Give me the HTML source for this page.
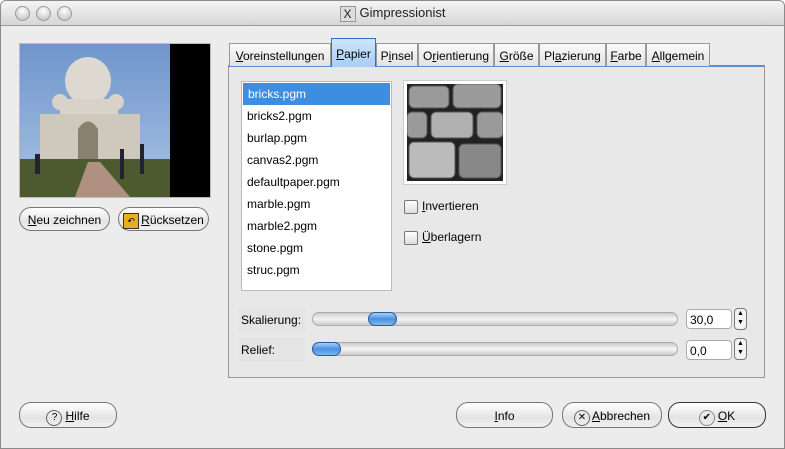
<!DOCTYPE html>
<html><head><style>
body{margin:0;width:785px;height:449px;background:#fff;font-family:"Liberation Sans",sans-serif;font-size:12px;overflow:hidden;position:relative}
.win{position:absolute;left:0;top:0;width:783px;height:447px;border:1px solid #8a8a8a;border-radius:6px 6px 0 0;background:#ececec;overflow:hidden}
.title{height:24px;background:linear-gradient(#f4f4f4,#d6d6d6);border-bottom:1px solid #9a9a9a;text-align:center;line-height:24px;font-size:13px;color:#222}
.dot{position:absolute;top:5px;width:13px;height:13px;border-radius:50%;background:radial-gradient(circle at 50% 30%,#fff,#bbb);border:1px solid #999}
.a{position:absolute}
.btn{position:absolute;height:24px;border:1px solid #777;border-radius:12px;background:linear-gradient(#fff,#e4e4e4 60%,#f0f0f0);text-align:center;line-height:24px;font-size:12px;box-sizing:border-box}
.tab{position:absolute;top:42px;height:23px;border:1px solid #999;border-bottom:none;background:linear-gradient(#fafafa,#e2e2e2);font-size:12px;line-height:24px;text-align:center;box-sizing:border-box}
.list div{height:22px;line-height:22px;padding-left:5px;font-size:12px}
.cb{position:absolute;width:12px;height:12px;border:1px solid #777;background:linear-gradient(#fff,#ddd);border-radius:2px}
.trough{position:absolute;height:12px;border:1px solid #aaa;border-radius:7px;background:linear-gradient(#ccc,#f4f4f4 50%,#ccc)}
.knob{position:absolute;height:12px;border:1px solid #2a5a9a;border-radius:7px;background:linear-gradient(#a8d0f8,#4a90e0 50%,#7fb8f0)}
.spin{position:absolute;width:46px;height:20px;border:1px solid #aaa;border-radius:4px;background:#fff;line-height:20px;padding-left:3px;box-sizing:border-box}
.arr{position:absolute;width:13px;height:22px;border:1px solid #777;border-radius:4px;background:#f4f4f4;font-size:7px;line-height:9px;text-align:center;box-sizing:border-box}
</style></head><body>
<div class="win">
<div class="title"><span style="display:inline-block;width:14px;height:14px;border:1px solid #999;background:#ddd;font-size:12px;line-height:14px;vertical-align:middle;margin-right:4px">X</span>Gimpressionist</div>
<div class="dot" style="left:14px"></div><div class="dot" style="left:35px"></div><div class="dot" style="left:56px"></div>

<div class="a" style="left:18px;top:42px;width:190px;height:153px;border:1px solid #bbb;background:#000">
<svg width="150" height="153" style="position:absolute;left:0;top:0">
<defs><linearGradient id="s" x1="0" y1="0" x2="0" y2="1"><stop offset="0" stop-color="#6f95cc"/><stop offset="1" stop-color="#a9c3e3"/></linearGradient></defs>
<rect width="150" height="153" fill="url(#s)"/>
<ellipse cx="68" cy="37" rx="23" ry="24" fill="#ddd8d0"/>
<rect x="40" y="55" width="58" height="60" fill="#d8d2c8"/>
<rect x="20" y="70" width="100" height="45" fill="#cfc8bc"/>
<ellipse cx="40" cy="58" rx="8" ry="8" fill="#d8d2c8"/><ellipse cx="96" cy="58" rx="8" ry="8" fill="#d8d2c8"/>
<path d="M58 115 V85 Q68 70 78 85 V115Z" fill="#8a8070"/>
<rect x="0" y="115" width="150" height="38" fill="#4d5a30"/>
<path d="M55 153 L68 118 L80 118 L110 153Z" fill="#b09080"/>
<rect x="120" y="100" width="4" height="30" fill="#223"/><rect x="100" y="105" width="4" height="30" fill="#223"/><rect x="15" y="110" width="5" height="20" fill="#223"/>
</svg></div>
<div class="btn" style="left:18px;top:206px;width:91px"><u>N</u>eu zeichnen</div>
<div class="btn" style="left:117px;top:206px;width:91px"><span style="display:inline-block;width:14px;height:14px;background:#e8b020;border:1px solid #333;vertical-align:middle;margin-right:2px;font-size:9px;line-height:14px">↶</span><u>R</u>ücksetzen</div>

<div class="a" style="left:227px;top:64px;width:535px;height:310px;border:1px solid #999;border-top:2px solid #5a8ed8;background:#e8e8e8"></div>
<div class="tab" style="left:228px;width:102px"><u>V</u>oreinstellungen</div>
<div class="tab" style="left:330px;top:37px;height:29px;width:45px;background:linear-gradient(#cfe4fb,#a8cdf5);border-color:#3a6cc0;line-height:30px"><u>P</u>apier</div>
<div class="tab" style="left:375px;width:42px">P<u>i</u>nsel</div>
<div class="tab" style="left:417px;width:76px">O<u>r</u>ientierung</div>
<div class="tab" style="left:493px;width:45px"><u>G</u>röße</div>
<div class="tab" style="left:538px;width:67px">Pl<u>a</u>zierung</div>
<div class="tab" style="left:605px;width:40px"><u>F</u>arbe</div>
<div class="tab" style="left:645px;width:64px"><u>A</u>llgemein</div>

<div class="a list" style="left:240px;top:80px;width:149px;height:207px;border:1px solid #bbb;background:#fff;padding-top:1px">
<div style="background:#3d8ee0;color:#fff;margin:0 1px">bricks.pgm</div><div>bricks2.pgm</div><div>burlap.pgm</div><div>canvas2.pgm</div><div>defaultpaper.pgm</div><div>marble.pgm</div><div>marble2.pgm</div><div>stone.pgm</div><div>struc.pgm</div></div>

<div class="a" style="left:402px;top:79px;width:102px;height:103px;border:1px solid #ccc;background:#fff">
<svg width="96" height="97" style="position:absolute;left:3px;top:3px"><rect width="96" height="97" fill="#222"/>
<g fill="#9a9a9a" stroke="#555"><rect x="2" y="2" width="40" height="22" rx="5"/><rect x="46" y="0" width="48" height="24" rx="5"/><rect x="0" y="28" width="20" height="26" rx="5"/><rect x="24" y="28" width="42" height="26" rx="5" fill="#b0b0b0"/><rect x="70" y="28" width="26" height="26" rx="5"/><rect x="2" y="58" width="46" height="36" rx="5" fill="#bbb"/><rect x="52" y="60" width="42" height="34" rx="5" fill="#888"/></g></svg></div>

<div class="cb" style="left:403px;top:199px"></div><div class="a" style="left:421px;top:198px"><u>I</u>nvertieren</div>
<div class="cb" style="left:403px;top:230px"></div><div class="a" style="left:421px;top:229px"><u>Ü</u>berlagern</div>

<div class="a" style="left:238px;top:307px;width:64px;height:24px;background:#e4e4e4;line-height:24px;padding-left:2px">Skalierung:</div>
<div class="trough" style="left:311px;top:311px;width:364px"></div>
<div class="knob" style="left:367px;top:311px;width:27px"></div>
<div class="spin" style="left:685px;top:308px">30,0</div><div class="arr" style="left:733px;top:307px">▲<br>▼</div>
<div class="a" style="left:238px;top:337px;width:64px;height:24px;background:#e4e4e4;line-height:24px;padding-left:2px">Relief:</div>
<div class="trough" style="left:311px;top:341px;width:364px"></div>
<div class="knob" style="left:311px;top:341px;width:27px"></div>
<div class="spin" style="left:685px;top:339px">0,0</div><div class="arr" style="left:733px;top:337px">▲<br>▼</div>

<div class="btn" style="left:18px;top:401px;width:98px;height:26px;line-height:26px"><span style="display:inline-block;width:14px;height:14px;border:1px solid #666;border-radius:50%;font-size:10px;line-height:14px;margin-right:3px">?</span><u>H</u>ilfe</div>
<div class="btn" style="left:455px;top:401px;width:97px;height:26px;line-height:26px"><u>I</u>nfo</div>
<div class="btn" style="left:561px;top:401px;width:100px;height:26px;line-height:26px"><span style="display:inline-block;width:14px;height:14px;border:1px solid #666;border-radius:50%;font-size:10px;line-height:14px;margin-right:2px">✕</span><u>A</u>bbrechen</div>
<div class="btn" style="left:667px;top:401px;width:98px;height:26px;line-height:26px;border-color:#333"><span style="display:inline-block;width:14px;height:14px;border:1px solid #888;border-radius:50%;font-size:10px;line-height:14px;margin-right:3px">✔</span><u>O</u>K</div>
</div>
</body></html>
